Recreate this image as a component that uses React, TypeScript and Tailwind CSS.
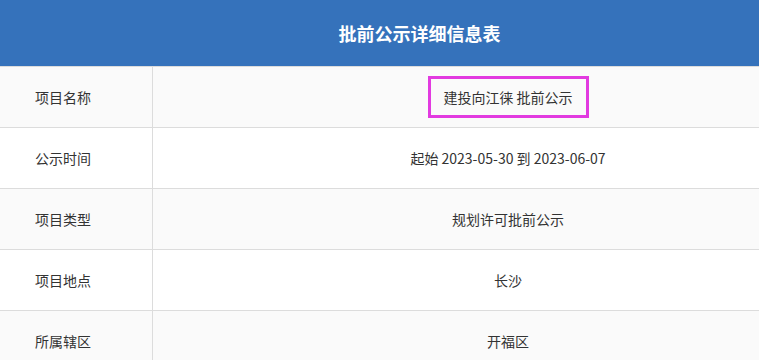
import React from "react";

const rows = [
  { label: "项目名称", value: "建投向江徕 批前公示", bg: "bg-[#fafafa]", boxed: true },
  { label: "公示时间", value: "起始 2023-05-30 到 2023-06-07", bg: "bg-white" },
  { label: "项目类型", value: "规划许可批前公示", bg: "bg-[#fafafa]" },
  { label: "项目地点", value: "长沙", bg: "bg-white" },
  { label: "所属辖区", value: "开福区", bg: "bg-[#fafafa]" },
];

export default function App() {
  return (
    <div
      className="relative w-[759px] h-[360px] overflow-hidden bg-white text-[#333]"
      style={{ fontFamily: '"Microsoft YaHei", "Noto Sans CJK SC", sans-serif' }}
    >
      <div className="h-[66px] bg-[#3572bb] flex items-center justify-center pl-[80px]">
        <span className="text-white text-[18px] font-bold tracking-[0px]">批前公示详细信息表</span>
      </div>
      {rows.map((r, i) => (
        <div key={i} className={`flex h-[61px] border-t border-[#dcdcdc] ${r.bg}`}>
          <div className="w-[153px] shrink-0 border-r border-[#dcdcdc] flex items-center pl-[35px] text-[14px]">
            {r.label}
          </div>
          <div className="flex-1 flex items-center justify-center pl-[104px] text-[14px]">
            {r.boxed ? (
              <span className="border-[3px] border-[#e23ae0] h-[42px] w-[161px] flex items-center justify-center">
                {r.value}
              </span>
            ) : (
              <span>{r.value}</span>
            )}
          </div>
        </div>
      ))}
    </div>
  );
}
